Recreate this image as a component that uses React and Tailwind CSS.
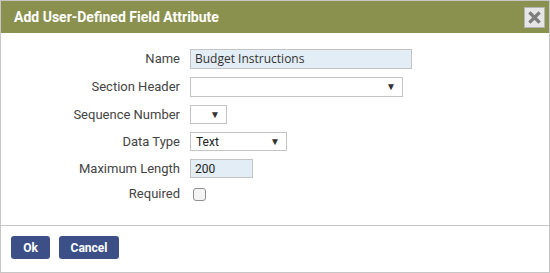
import React from "react";

const Arrow = () => (
  <span className="text-[10px] leading-none text-[#333]">▼</span>
);

const Row = ({ label, children, className = "" }) => (
  <div className={`flex items-center h-[20px] ${className}`}>
    <div className="w-[179px] text-right text-[13px] text-[#444]">{label}</div>
    <div className="ml-[10px] flex items-center">{children}</div>
  </div>
);

export default function App() {
  return (
    <div
      className="w-[550px] h-[273px] border border-[#c6c6c6] flex flex-col bg-white"
      style={{ fontFamily: "Roboto, 'Liberation Sans', sans-serif" }}
    >
      {/* title bar */}
      <div className="h-[32px] bg-[#8a914e] flex items-center justify-between pl-[13px] pr-[4px]">
        <span className="text-white font-bold text-[14px]">
          Add User-Defined Field Attribute
        </span>
        <button className="w-[21px] h-[21px] mt-[1px] bg-[#e6e6e6] border border-[#b4b4b4] flex items-center justify-center">
          <svg width="13" height="13" viewBox="0 0 13 13">
            <path d="M2.5 2.5 L10.5 10.5 M10.5 2.5 L2.5 10.5" stroke="#7d7d7d" strokeWidth="3.2" strokeLinecap="square" />
          </svg>
        </button>
      </div>

      {/* form */}
      <div className="flex-1 pt-[16px] flex flex-col gap-2">
        <Row label="Name">
          <div
            className="w-[222px] h-[20px] border border-[#c4c4c4] bg-[#e3edf5] px-[4px] flex items-center text-[12px] text-[#333]"
            style={{ fontFamily: "'Open Sans', sans-serif" }}
          >
            Budget Instructions
          </div>
        </Row>
        <Row label="Section Header">
          <div className="w-[213px] h-[20px] border border-[#c4c4c4] flex items-center justify-end pr-[6px]">
            <Arrow />
          </div>
        </Row>
        <Row label="Sequence Number" className="!h-[19px]">
          <div className="w-[37px] h-[19px] border border-[#c4c4c4] flex items-center justify-end pr-[6px]">
            <Arrow />
          </div>
        </Row>
        <Row label="Data Type" className="!h-[19px]">
          <div className="w-[97px] h-[19px] border border-[#c4c4c4] flex items-center justify-between pl-[5px] pr-[6px] text-[12px] text-[#222]">
            <span>Text</span>
            <Arrow />
          </div>
        </Row>
        <Row label="Maximum Length" className="!h-[19px]">
          <div className="w-[63px] h-[19px] border border-[#c4c4c4] bg-[#e3edf5] px-[4px] flex items-center text-[12px] text-[#222]">
            200
          </div>
        </Row>
        <Row label="Required" className="mt-[-2px]">
          <div className="ml-[3px] w-[13px] h-[13px] border border-[#8f8f8f] rounded-[3px] bg-[#f4f4f4]" />
        </Row>
      </div>

      {/* footer */}
      <div className="h-[47px] border-t border-[#c6c6c6] flex items-start pt-[10px] pl-[10px] gap-[9px]">
        <button className="w-[39px] h-[23px] rounded-[3px] bg-[#3c4f86] text-white font-bold text-[12px]">
          Ok
        </button>
        <button className="w-[60px] h-[23px] rounded-[3px] bg-[#3c4f86] text-white font-bold text-[12px]">
          Cancel
        </button>
      </div>
    </div>
  );
}
